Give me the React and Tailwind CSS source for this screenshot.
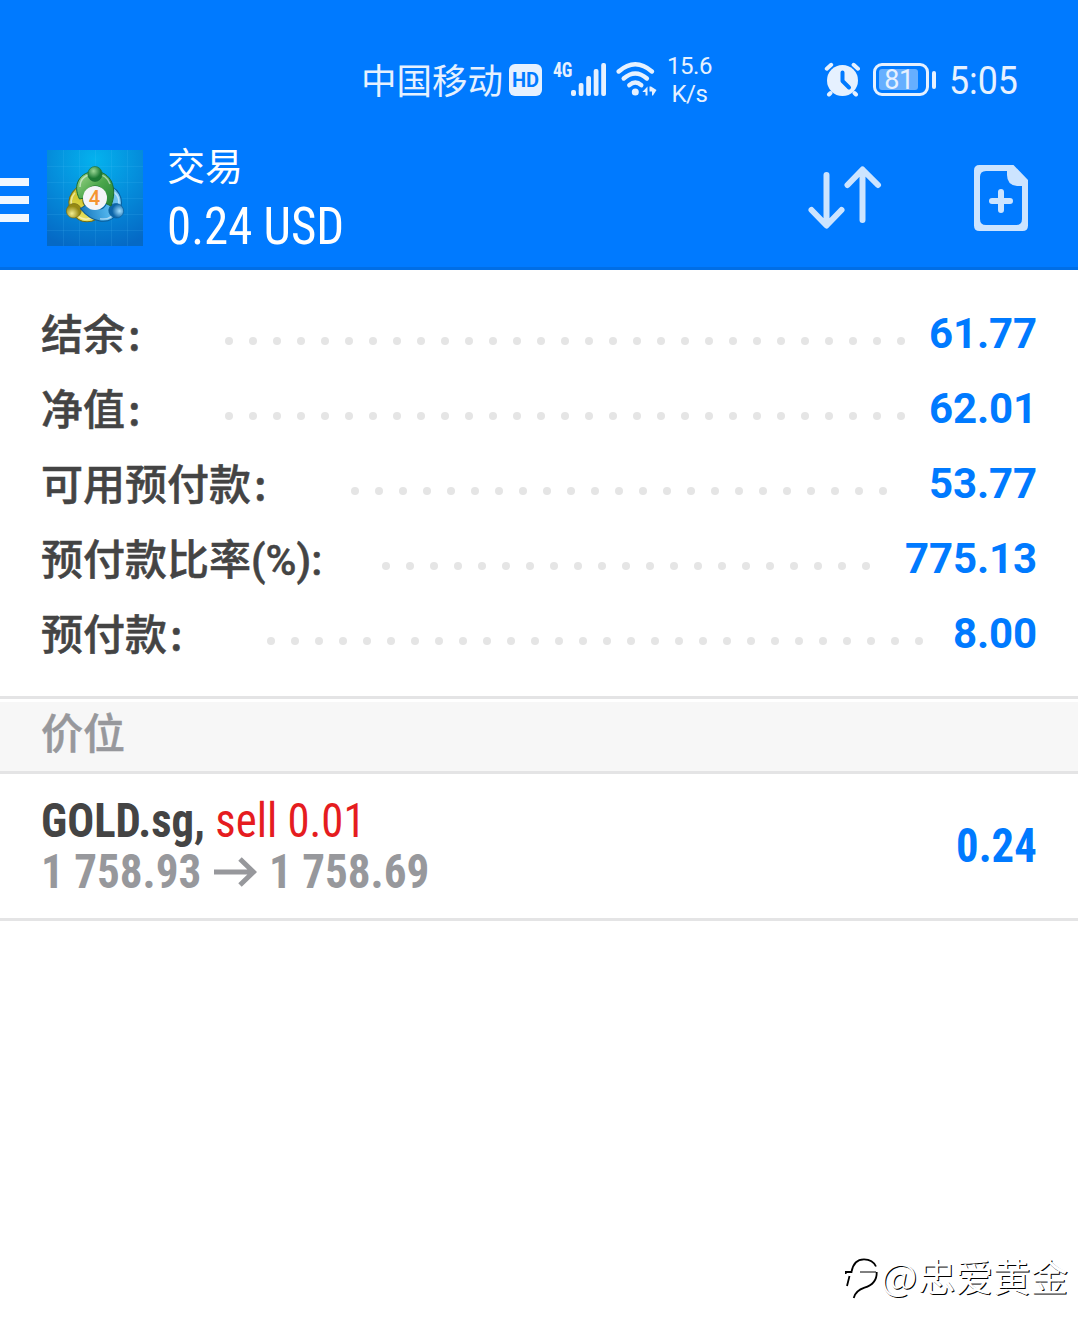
function SignalIcon() {
  return (
    <div className="flex h-[34px] w-[53px] shrink-0">
      <span className="-mt-[4px] w-[18px] origin-left scale-x-[.9] text-[20px] leading-[22px] font-bold tracking-[-0.3px] font-stretch-75%">4G</span>
      <svg width="35" height="34" viewBox="0 0 35 34" className="shrink-0" fill="#e6f1ff">
        <rect x="0" y="27" width="5" height="6" rx="2" />
        <rect x="7.7" y="20" width="4.8" height="13" rx="2" />
        <rect x="15.2" y="13" width="4.8" height="20" rx="2" />
        <rect x="22.7" y="6" width="4.8" height="27" rx="2" />
        <rect x="30.2" y="0" width="4.8" height="33" rx="2" />
      </svg>
    </div>
  );
}

function WifiIcon() {
  return (
    <svg width="42" height="36" viewBox="0 0 42 36" className="shrink-0" fill="none" stroke="#e6f1ff" strokeWidth="4.400" strokeLinecap="round">
      <path d="M2.700 9.500Q19.300 -4.900 35.900 9.500" />
      <path d="M7.700 16.500Q19.300 6.500 30.900 16.500" />
      <path d="M13.300 23.200Q19.300 17.800 25.300 23.200" />
      <circle cx="19.300" cy="30" r="3.500" fill="#e6f1ff" stroke="none" />
      <path d="M26.300 30L31.500 24.500V33.500H29.500V30ZM33.500 24.500H35L40.500 28L37 33.500H36V29.500H33.500Z" fill="#e6f1ff" stroke="none" />
    </svg>
  );
}

function AlarmIcon() {
  return (
    <svg width="36" height="36" viewBox="0 0 36 36" className="shrink-0" fill="none" strokeLinecap="round" strokeLinejoin="round">
      <circle cx="18.500" cy="18.500" r="15.5" fill="#e6f1ff" />
      <path d="M2.800 6.700L7.200 2.800M34 6.700L29.600 2.800M6.500 31L5 32.500M30.500 31L32 32.500" stroke="#e6f1ff" strokeWidth="4" />
      <path d="M18.500 10.500V19L25 25.500" stroke="#007aff" strokeWidth="4" />
    </svg>
  );
}

function BatteryIcon() {
  return (
    <div className="flex items-center gap-[3px]">
      <div className="flex h-[33px] w-[56px] items-center rounded-[9px] border-3 border-[#e6f1ff] px-[3px]">
        <div className="flex h-[21px] w-[39px] items-center justify-center rounded-[3px] bg-[#66afff] pt-[2px] pl-[1px] text-[27px] tracking-[-0.5px] text-[#e6f1ff]">81</div>
      </div>
      <div className="h-[18px] w-[4px] rounded-full bg-[#e6f1ff]" />
    </div>
  );
}

function StatusBar() {
  return (
    <div className="flex h-[130px] items-center pt-[29px] pl-[361px] text-[#e6f1ff]">
      <span className="w-[148px] pt-[6px] text-[35.500px] whitespace-nowrap">中国移动</span>
      <span className="mr-[11px] flex h-[32px] w-[33px] items-center justify-center rounded-[6px] bg-[#e6f1ff] text-[20px] font-bold text-[#007aff]">HD</span>
      <SignalIcon />
      <div className="w-[10px]" />
      <WifiIcon />
      <div className="ml-[8px] flex w-[46px] flex-col items-center text-[24px] leading-[28px] tracking-[-0.5px]">
        <span className="pl-[1px]">15.6</span>
        <span className="pl-[1px]">K/s</span>
      </div>
      <div className="ml-[112px] flex items-center">
        <AlarmIcon />
        <div className="w-[13px]" />
        <BatteryIcon />
        <span className="ml-[13px] origin-left scale-x-[.94] pt-[4px] text-[38px]">5:05</span>
      </div>
    </div>
  );
}

// one figure of the MetaTrader emblem: a ring with a head on the outside
function Figure({ fill, dark, turn }) {
  return (
    <g transform={`rotate(${turn} 48 48.500)`}>
      <path d="M32.500 49C25 35 33 21.500 48 21.500C64 21.500 71 38 64 56L54 51C58 41 55 36 48 36C41 36 40 42 42 47Z" fill={`url(#${fill})`} stroke={dark} strokeWidth="1" />
      <path d="M33 37C33 28 40 24 48 24C56 24 61 28 63 34" fill="none" stroke="#fff" strokeOpacity=".5" strokeWidth="1.500" />
      <ellipse cx="48" cy="24" rx="7.200" ry="7.500" fill={`url(#${fill}Head)`} stroke={dark} strokeWidth=".6" />
    </g>
  );
}

function AppLogo() {
  return (
    <svg width="96" height="96" viewBox="0 0 96 96" className="shrink-0">
      <defs>
        <radialGradient id="sky" cx=".5" cy=".1" r=".95">
          <stop offset="0" stopColor="#04b2ee" />
          <stop offset=".5" stopColor="#058ddb" />
          <stop offset="1" stopColor="#0569c5" />
        </radialGradient>
        <linearGradient id="green" x2="1" y2="1"><stop stopColor="#a5d98d" /><stop offset=".5" stopColor="#4aa64b" /><stop offset="1" stopColor="#238236" /></linearGradient>
        <radialGradient id="greenHead" cx=".4" cy=".3"><stop stopColor="#9cd895" /><stop offset="1" stopColor="#1d7b34" /></radialGradient>
        <linearGradient id="blue" x2="1" y2="1"><stop stopColor="#8fd4fa" /><stop offset=".5" stopColor="#4aaee8" /><stop offset="1" stopColor="#1474b9" /></linearGradient>
        <radialGradient id="blueHead" cx=".4" cy=".3"><stop stopColor="#a4e0ff" /><stop offset="1" stopColor="#0c65a9" /></radialGradient>
        <linearGradient id="gold" x2="1" y2="1"><stop stopColor="#f3ec78" /><stop offset=".5" stopColor="#d5cb35" /><stop offset="1" stopColor="#c0b52a" /></linearGradient>
        <radialGradient id="goldHead" cx=".4" cy=".3"><stop stopColor="#f3ee91" /><stop offset="1" stopColor="#958914" /></radialGradient>
      </defs>
      <rect width="96" height="96" fill="url(#sky)" />
      <path d="M16.500 0V96M32.500 0V96M48.500 0V96M64.500 0V96M80.500 0V96M0 16.500H96M0 32.500H96M0 48.500H96M0 64.500H96M0 80.500H96" stroke="#5cc6ff" strokeOpacity=".13" />
      <Figure fill="gold" dark="#746c13" turn={-120} />
      <Figure fill="blue" dark="#0b5c98" turn={120} />
      <Figure fill="green" dark="#1b6c30" turn={0} />
      <circle cx="48" cy="48" r="12" fill="#f4f4f8" />
      <text x="47.500" y="55" textAnchor="middle" fontFamily="Roboto, sans-serif" fontWeight="500" fontSize="20" fill="#f59331">4</text>
    </svg>
  );
}

function SortIcon() {
  return (
    <svg width="74" height="64" viewBox="0 0 74 64" className="shrink-0" fill="none" stroke="#cce4ff" strokeWidth="6" strokeLinecap="round" strokeLinejoin="round">
      <path d="M18.500 9V59M3.500 44L18.500 59.500L33.500 44M54.500 54V4M39.500 19L54.500 3.500L70 19" />
    </svg>
  );
}

function NewOrderIcon() {
  return (
    <svg width="54" height="66" viewBox="0 0 54 66" className="shrink-0">
      <path fillRule="evenodd" fill="#cce4ff" d="M5.500 0H39.500L54 15V60.500Q54 66 48.500 66H5.500Q0 66 0 60.500V5.500Q0 0 5.500 0ZM12 6Q6 6 6 12V54Q6 60 12 60H42Q48 60 48 54V21H43Q33 20 33 10V6Z" />
      <path d="M27 27V45M18 36H36" stroke="#cce4ff" strokeWidth="6" strokeLinecap="round" />
    </svg>
  );
}

function TitleBar() {
  return (
    <div className="flex h-[137px] items-start">
      <div className="mt-[48px] flex w-[29px] flex-col gap-[10px]">
        <div className="h-[8px] bg-[#f0f7ff]" />
        <div className="h-[8px] bg-[#f0f7ff]" />
        <div className="h-[8px] bg-[#f0f7ff]" />
      </div>
      <div className="mt-[20px] ml-[18px]"><AppLogo /></div>
      <div className="mt-[7px] ml-[24px] flex w-[641px] flex-col text-white">
        <span className="text-[38px] leading-[60px]">交易</span>
        <span className="origin-left scale-x-[.94] text-[52px] leading-[60px] font-stretch-75%">0.24 USD</span>
      </div>
      <div className="mt-[36px]"><SortIcon /></div>
      <div className="mt-[35px] ml-[92px]"><NewOrderIcon /></div>
    </div>
  );
}

const summary = [
  { label: "结余", colon: true, value: "61.77", dots: 29, start: "w-[184px]" },
  { label: "净值", colon: true, value: "62.01", dots: 29, start: "w-[184px]" },
  { label: "可用预付款", colon: true, value: "53.77", dots: 23, start: "w-[310px]" },
  { label: "预付款比率(%):", value: "775.13", dots: 21, start: "w-[341px]" },
  { label: "预付款", colon: true, value: "8.00", dots: 28, start: "w-[226px]" },
];

function SummaryRow({ label, colon, value, dots, start }) {
  return (
    <div className="flex h-[75px] items-center text-[42px]">
      <span className={`${start} shrink-0 pt-[3px] font-medium whitespace-nowrap text-[#444444] [-webkit-text-stroke:0.5px_#444444]`}>
        {label}
        {colon && <span className="pl-[3px] font-['Noto_Sans_CJK_SC',sans-serif] leading-none">:</span>}
      </span>
      <div className="mt-[14px] flex gap-[16px]">
        {Array.from({ length: dots }, (_, i) => (
          <div key={i} className="size-[8px] rounded-full bg-[#e5e5e5]" />
        ))}
      </div>
      <span className="-mr-[1px] ml-auto font-bold tracking-[-0.1px] text-[#007aff]">{value}</span>
    </div>
  );
}

function Position() {
  return (
    <div className="flex h-[147px] items-center border-b-3 border-[#e4e4e5] pr-[41px] pl-[41px] font-stretch-75%">
      <div className="flex flex-col text-[48px] leading-[51px]">
        <div className="origin-left scale-x-[.932] whitespace-pre">
          <span className="font-bold text-[#444444]">GOLD.sg, </span>
          <span className="text-[#e51c20]">sell 0.01</span>
        </div>
        <div className="flex items-center font-bold text-[#97989c]">
          <span className="w-[159px] origin-left scale-x-[.94] whitespace-nowrap">1 758.93</span>
          <svg width="43" height="30" viewBox="0 0 43 30" className="mr-[12px] ml-[14px] shrink-0" fill="none" stroke="#97989c" strokeWidth="5">
            <path d="M0 15H39.500M26 2L39.500 15L26 28" />
          </svg>
          <span className="w-[159px] origin-left scale-x-[.94] whitespace-nowrap">1 758.69</span>
        </div>
      </div>
      <span className="ml-auto origin-right scale-x-[.93] text-[48px] font-bold text-[#007aff]">0.24</span>
    </div>
  );
}

function Watermark() {
  return (
    <div className="mt-auto mr-[10px] mb-[39px] flex h-[46px] items-center justify-end font-['Noto_Sans_CJK_SC',sans-serif] text-[37.500px] text-white [text-shadow:1px_1px_0.5px_#000]">
      <svg width="36" height="46" viewBox="0 0 36 46" fill="none" stroke="#000" strokeWidth="1.800">
        <path d="M.7 20V18H6.500C8 9 13 5.300 19 5.300C25 5.300 29 8 31 12.500M4.500 22L2 32" />
        <path d="M31.700 18C32 27 27 31.500 19.500 33.700C14 35.500 10 39 8.700 44" />
        <path d="M15 18H31" strokeWidth="1" />
      </svg>
      <span className="-mt-[5px] w-[37px] origin-left scale-x-105 text-[38px] font-light">@</span>
      <span className="-mt-[4px]">忠爱黄金</span>
    </div>
  );
}

export default function App() {
  return (
    <div className="flex h-[1339px] w-[1078px] flex-col overflow-hidden bg-white font-[Roboto,'Noto_Sans_CJK_SC',sans-serif]">
      <header className="h-[270px] border-b-3 border-[#006ee6] bg-[#007aff]">
        <StatusBar />
        <TitleBar />
      </header>
      <section className="h-[429px] border-b-3 border-[#e4e4e5] pt-[26px] pr-[42px] pl-[41px]">
        {summary.map((row) => (
          <SummaryRow key={row.label} {...row} />
        ))}
      </section>
      <div className="mt-[3px] flex h-[72px] items-center border-b-3 border-[#e4e4e5] bg-[#f7f7f7] pb-[4px] pl-[41px] text-[42px] font-medium text-[#97989c] [-webkit-text-stroke:0.5px_#97989c]">价位</div>
      <Position />
      <Watermark />
    </div>
  );
}
